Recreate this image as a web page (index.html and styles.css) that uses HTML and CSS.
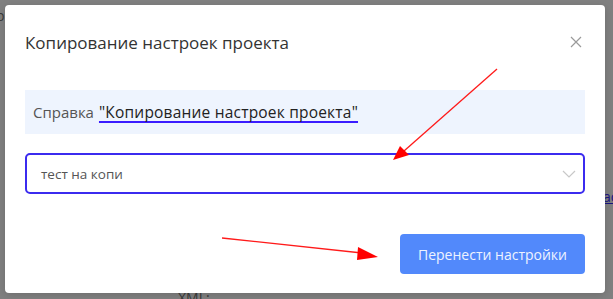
FILE: index.html
```html
<!DOCTYPE html>
<html lang="ru">
<head>
    <meta charset="UTF-8">
    <title>Копирование настроек проекта</title>
    <link rel="stylesheet" href="styles.css">
</head>
<body>
    <div class="backdrop">
        <span class="bg-text bg-top">р</span>
        <span class="bg-text bg-link">ас</span>
        <span class="bg-text bg-xml">XML:</span>
    </div>

    <div class="modal">
        <div class="modal-header">
            <h2>Копирование настроек проекта</h2>
            <button class="close-btn" aria-label="Закрыть">
                <svg width="12" height="12" viewBox="0 0 12 12">
                    <path d="M1 1L11 11M11 1L1 11" stroke="#9a9a9a" stroke-width="1.2" fill="none"/>
                </svg>
            </button>
        </div>

        <div class="help">
            Справка <a href="#">"Копирование настроек проекта"</a>
        </div>

        <div class="select">
            <span>тест на копи</span>
            <svg width="14" height="8" viewBox="0 0 14 8">
                <path d="M1 1L7 7L13 1" stroke="#c8c8c8" stroke-width="1.2" fill="none"/>
            </svg>
        </div>

        <div class="modal-footer">
            <button class="primary-btn">Перенести настройки</button>
        </div>
    </div>

    <!-- стрелки-пометки поверх скриншота -->
    <svg class="marks" width="613" height="299" viewBox="0 0 613 299">
        <line x1="497" y1="69" x2="404" y2="151" stroke="#ff1a1a" stroke-width="1.3"/>
        <polygon points="393,160 400,146 409,155" fill="#ff0000"/>
        <line x1="222" y1="238" x2="362" y2="253" stroke="#ff1a1a" stroke-width="1.3"/>
        <polygon points="378,257 358,247 357,260" fill="#ff0000"/>
    </svg>
</body>
</html>
```

FILE: styles.css
```css
* {
    box-sizing: border-box;
}
body {
    margin: 0;
    width: 613px;
    height: 299px;
    overflow: hidden;
    background-color: #808080;
    font-family: "Open Sans", "Noto Sans", sans-serif;
    position: relative;
}
.backdrop {
    position: absolute;
    inset: 0;
}
.bg-text {
    position: absolute;
    color: #3a3a3a;
    font-size: 14px;
}
.bg-top {
    left: -4px;
    top: 6px;
}
.bg-link {
    left: 603px;
    top: 187px;
    color: #1a1580;
    text-decoration: underline;
}
.bg-xml {
    left: 178px;
    top: 288px;
}
.modal {
    position: relative;
    margin: 5px 0 0 5px;
    width: 600px;
    height: 288px;
    background: #fff;
    border-radius: 4px;
    padding: 0 20px;
    box-shadow: 0 2px 8px rgba(0,0,0,0.15);
}
.modal-header {
    display: flex;
    justify-content: space-between;
    align-items: center;
    height: 76px;
    padding-bottom: 2px;
}
.modal-header h2 {
    margin: 0;
    font-size: 17px;
    font-weight: 400;
    color: #333;
}
.close-btn {
    background: none;
    border: none;
    padding: 0;
    margin-right: 3px;
    width: 12px;
    height: 12px;
    display: flex;
    cursor: pointer;
}
.help {
    margin-top: 9px;
    height: 44px;
    display: flex;
    align-items: center;
    gap: 5px;
    padding: 0 8px;
    background-color: #eef4fe;
    font-size: 15px;
    color: #555;
}
.help a {
    color: #222;
    font-size: 15.5px;
    font-weight: 500;
    letter-spacing: 0.2px;
    text-decoration: underline;
    text-decoration-color: #3a1cff;
    text-decoration-thickness: 2px;
    text-decoration-skip-ink: none;
    text-underline-offset: 3px;
}
.select {
    margin-top: 19px;
    height: 41px;
    border: 2px solid #3b2bef;
    border-radius: 5px;
    display: flex;
    justify-content: space-between;
    align-items: center;
    padding: 0 7px 0 14px;
    font-size: 13.5px;
    color: #555;
}
.modal-footer {
    display: flex;
    justify-content: flex-end;
    margin-top: 40px;
}
.primary-btn {
    width: 185px;
    height: 40px;
    border: none;
    border-radius: 4px;
    background-color: #5289fb;
    color: #eef3ff;
    font-family: inherit;
    font-size: 14px;
    cursor: pointer;
}
.marks {
    position: absolute;
    left: 0;
    top: 0;
    pointer-events: none;
}
```
